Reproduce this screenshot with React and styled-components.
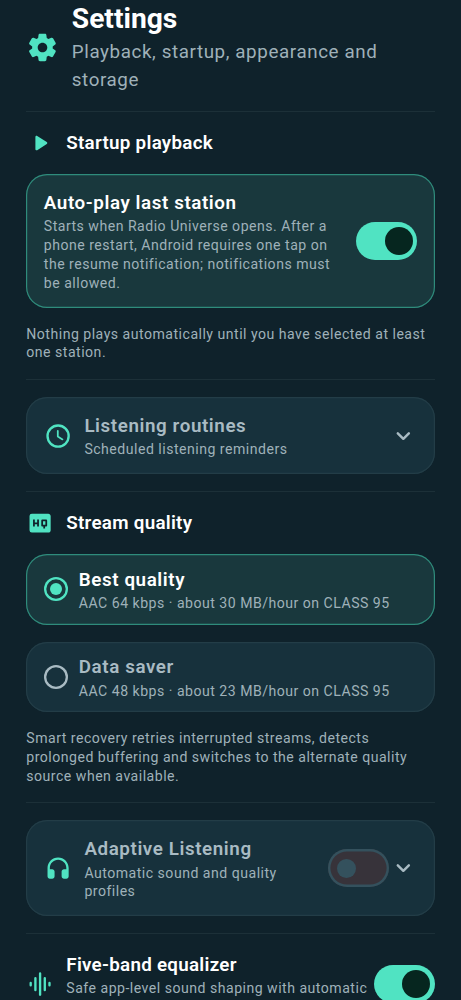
import React from "react";
import styled, { createGlobalStyle } from "styled-components";
import { MdHighQuality } from "react-icons/md";

function Toggle({ on }) {
  return (
    <Track role="switch" aria-checked={on} $on={on}>
      <Thumb $on={on} />
    </Track>
  );
}

function GearIcon() {
  return (
    <svg viewBox="0 0 24 24" fill="currentColor">
      <path d="M19.5 12c0-.23-.01-.45-.03-.68l1.86-1.41c.4-.3.51-.86.26-1.3l-1.87-3.23c-.25-.44-.79-.62-1.25-.42l-2.15.91c-.37-.26-.76-.49-1.17-.68l-.29-2.31C14.8 2.38 14.37 2 13.87 2h-3.73c-.51 0-.94.38-1 .88l-.29 2.31c-.41.19-.8.42-1.17.68l-2.15-.91c-.46-.2-1-.02-1.25.42L2.41 8.62c-.25.44-.14.99.26 1.3l1.86 1.41c-.02.22-.03.44-.03.67s.01.45.03.68l-1.86 1.41c-.4.3-.51.86-.26 1.3l1.87 3.23c.25.44.79.62 1.25.42l2.15-.91c.37.26.76.49 1.17.68l.29 2.31c.06.5.49.88.99.88h3.73c.5 0 .93-.38.99-.88l.29-2.31c.41-.19.8-.42 1.17-.68l2.15.91c.46.2 1 .02 1.25-.42l1.87-3.23c.25-.44.14-.99-.26-1.3l-1.86-1.41c.03-.23.04-.45.04-.68zm-7.46 3.5c-1.93 0-3.5-1.57-3.5-3.5s1.57-3.5 3.5-3.5 3.5 1.57 3.5 3.5-1.57 3.5-3.5 3.5z" />
    </svg>
  );
}

function PlayIcon() {
  return (
    <svg viewBox="0 0 24 24" fill="currentColor">
      <path d="M8 6.82v10.36c0 .79.87 1.27 1.54.84l8.14-5.18c.62-.39.62-1.29 0-1.69L9.54 5.98C8.87 5.55 8 6.03 8 6.82z" />
    </svg>
  );
}

function ClockIcon() {
  return (
    <svg viewBox="0 0 24 24" fill="none" stroke="currentColor">
      <circle cx="12" cy="12" r="9" strokeWidth="2" />
      <path
        d="M11.75 7.6v4.8l4 2.4"
        strokeWidth="1.5"
        strokeLinecap="round"
        strokeLinejoin="round"
      />
    </svg>
  );
}

function HeadphonesIcon() {
  return (
    <svg viewBox="0 0 24 24" fill="currentColor">
      <path d="M3 12v7c0 1.1.9 2 2 2h2c1.1 0 2-.9 2-2v-4c0-1.1-.9-2-2-2H5v-1c0-3.87 3.13-7 7-7s7 3.13 7 7v1h-2c-1.1 0-2 .9-2 2v4c0 1.1.9 2 2 2h2c1.1 0 2-.9 2-2v-7c0-4.97-4.03-9-9-9s-9 4.03-9 9z" />
    </svg>
  );
}

function EqualizerIcon() {
  return (
    <svg
      viewBox="0 0 24 24"
      fill="none"
      stroke="currentColor"
      strokeWidth="2"
      strokeLinecap="round"
    >
      <path d="M4 11v2M8 7v10M12 3v18M16 7v10M20 11v2" />
    </svg>
  );
}

function ChevronIcon() {
  return (
    <svg
      viewBox="0 0 24 24"
      fill="none"
      stroke="currentColor"
      strokeWidth="2.1"
      strokeLinecap="round"
      strokeLinejoin="round"
    >
      <path d="M7.5 9.7l4.7 4.6L16.9 9.7" />
    </svg>
  );
}

function QualityOption({ title, detail, selected }) {
  return (
    <Card $active={selected} $compact>
      <Radio $selected={selected} />
      <Texts>
        <CardTitle $active={selected}>{title}</CardTitle>
        <Small>{detail}</Small>
      </Texts>
    </Card>
  );
}

function App() {
  return (
    <>
      <GlobalStyle />
      <Page>
        <Header>
          <Icon $size={32.9}>
            <GearIcon />
          </Icon>
          <Texts>
            <Heading>Settings</Heading>
            <Subtitle>Playback, startup, appearance and storage</Subtitle>
          </Texts>
        </Header>
        <Divider />
        <SectionRow>
          <Icon>
            <PlayIcon />
          </Icon>
          <SectionTitle>Startup playback</SectionTitle>
        </SectionRow>
        <Card $active>
          <Texts>
            <CardTitle $active>Auto-play last station</CardTitle>
            <Small>
              Starts when Radio Universe opens. After a phone restart, Android
              requires one tap on the resume notification; notifications must be
              allowed.
            </Small>
          </Texts>
          <Toggle on />
        </Card>
        <Small>
          Nothing plays automatically until you have selected at least one
          station.
        </Small>
        <Divider />
        <Card>
          <Icon>
            <ClockIcon />
          </Icon>
          <Texts>
            <CardTitle>Listening routines</CardTitle>
            <Small>Scheduled listening reminders</Small>
          </Texts>
          <Icon $muted>
            <ChevronIcon />
          </Icon>
        </Card>
        <Divider />
        <SectionRow>
          <Icon>
            <MdHighQuality />
          </Icon>
          <SectionTitle>Stream quality</SectionTitle>
        </SectionRow>
        <QualityOption
          selected
          title="Best quality"
          detail="AAC 64 kbps · about 30 MB/hour on CLASS 95"
        />
        <QualityOption
          title="Data saver"
          detail="AAC 48 kbps · about 23 MB/hour on CLASS 95"
        />
        <Small>
          Smart recovery retries interrupted streams, detects prolonged
          buffering and switches to the alternate quality source when available.
        </Small>
        <Divider />
        <Card>
          <Icon>
            <HeadphonesIcon />
          </Icon>
          <Texts>
            <CardTitle>Adaptive Listening</CardTitle>
            <Small>Automatic sound and quality profiles</Small>
          </Texts>
          <Controls>
            <Toggle on={false} />
            <Icon $muted>
              <ChevronIcon />
            </Icon>
          </Controls>
        </Card>
        <Divider />
        <EqualizerRow>
          <Icon>
            <EqualizerIcon />
          </Icon>
          <Texts>
            <SectionTitle>Five-band equalizer</SectionTitle>
            <Small>Safe app-level sound shaping with automatic</Small>
          </Texts>
          <Toggle on />
        </EqualizerRow>
      </Page>
    </>
  );
}

export default App;

const GlobalStyle = createGlobalStyle`
  * {
    box-sizing: border-box;
  }
  body {
    margin: 0;
    background: #0f222b;
    font-family: Roboto, "Liberation Sans", sans-serif;
  }
  h1, h2, h3, p {
    margin: 0;
  }
`;

const Page = styled.main`
  width: 461px;
  height: 1000px;
  overflow: hidden;
  padding: 0 26.1px 0 26.3px;
  display: flex;
  flex-direction: column;
  gap: 16.79px;
  background: #0f222b;

  > * {
    flex-shrink: 0;
  }
`;

const Header = styled.header`
  display: flex;
  align-items: center;
  gap: 12.6px;
`;

const Icon = styled.span`
  flex: none;
  display: flex;
  width: ${(props) => props.$size || 28.2}px;
  height: ${(props) => props.$size || 28.2}px;
  color: ${(props) => (props.$muted ? "#a9bbc3" : "#50e3c2")};

  svg {
    width: 100%;
    height: 100%;
  }
`;

const Texts = styled.div`
  flex: 1;
  min-width: 0;
`;

const Heading = styled.h1`
  font-size: 28.2px;
  line-height: 37.6px;
  font-weight: 700;
  color: #fff;
`;

const Subtitle = styled.p`
  font-size: 18.8px;
  line-height: 28.2px;
  letter-spacing: 0.6px;
  color: #9fb1b9;
`;

const Divider = styled.div`
  height: 1.2px;
  background: #1c3038;
`;

const SectionRow = styled.div`
  display: flex;
  align-items: center;
  gap: 11.8px;
`;

const EqualizerRow = styled(SectionRow)`
  min-height: 65.9px;

  > div:nth-child(2) {
    align-self: flex-start;
  }
  > div:last-child {
    margin-left: -6px;
  }
`;

const SectionTitle = styled.h2`
  font-size: 18.8px;
  line-height: 28.2px;
  letter-spacing: 0.28px;
  font-weight: 600;
  color: #fff;
`;

const Card = styled.section`
  display: flex;
  align-items: center;
  gap: ${(props) => (props.$compact ? "11px" : "12.4px")};
  padding: ${(props) => (props.$compact ? "11.8px" : "15.3px")} 17.5px;
  border-radius: 21px;
  background: ${(props) => (props.$active ? "#19383d" : "#17313c")};
  box-shadow: inset 0 0 0 1.2px
    ${(props) => (props.$active ? "#2f8c7c" : "#233d47")};
`;

const CardTitle = styled.h3`
  font-size: 18.8px;
  line-height: 28.2px;
  letter-spacing: 0.59px;
  font-weight: 600;
  color: ${(props) => (props.$active ? "#fff" : "#a9bbc3")};
`;

const Small = styled.p`
  font-size: 14.1px;
  line-height: 18.8px;
  letter-spacing: 0.49px;
  color: #9fb1b9;
`;

const Controls = styled.div`
  display: flex;
  align-items: center;
`;

const Track = styled.div`
  flex: none;
  display: flex;
  align-items: center;
  justify-content: ${(props) => (props.$on ? "flex-end" : "flex-start")};
  width: 61.2px;
  height: 37.6px;
  padding: ${(props) => (props.$on ? "0 4.7px" : "0 9.4px")};
  border-radius: 19px;
  background: ${(props) => (props.$on ? "#50e3c2" : "#37333a")};
  box-shadow: ${(props) => (props.$on ? "none" : "inset 0 0 0 2.4px #34515d")};
`;

const Thumb = styled.div`
  width: ${(props) => (props.$on ? 28.2 : 18.8)}px;
  height: ${(props) => (props.$on ? 28.2 : 18.8)}px;
  border-radius: 50%;
  background: ${(props) => (props.$on ? "#06261f" : "#34515d")};
`;

const Radio = styled.span`
  flex: none;
  display: flex;
  align-items: center;
  justify-content: center;
  width: 24px;
  height: 24px;
  border-radius: 50%;
  box-shadow: inset 0 0 0 2.3px
    ${(props) => (props.$selected ? "#50e3c2" : "#a9bbc3")};

  &::after {
    content: "";
    width: 12px;
    height: 12px;
    border-radius: 50%;
    background: ${(props) => (props.$selected ? "#50e3c2" : "transparent")};
  }
`;
